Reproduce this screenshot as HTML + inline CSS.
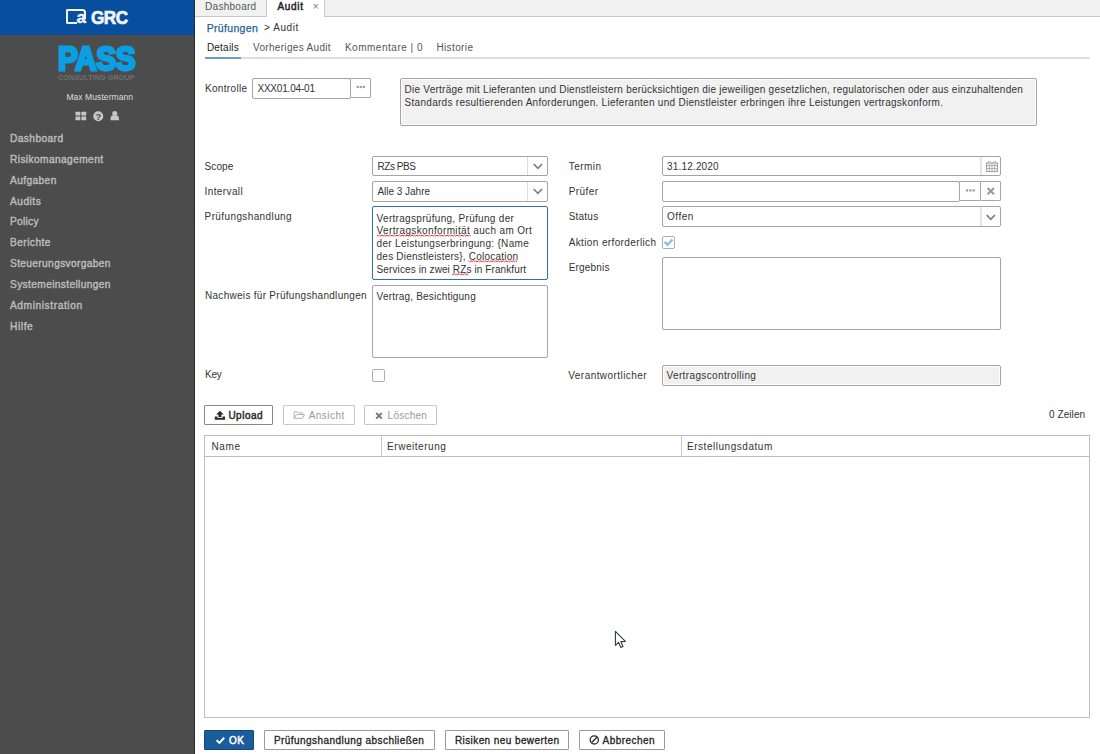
<!DOCTYPE html>
<html lang="de"><head><meta charset="utf-8"><title>CaGRC – Audit</title>
<style>
html,body{margin:0;padding:0;}
body{width:1100px;height:754px;position:relative;overflow:hidden;background:#fff;font-family:"Liberation Sans",sans-serif;font-size:10px;color:#333;}
.a{position:absolute;box-sizing:border-box;}
.t{position:absolute;white-space:nowrap;line-height:14px;height:14px;}
.t u{text-decoration:none;}
#side{left:0;top:0;width:194px;height:754px;background:#4c4c4c;}
#hdr{left:0;top:0;width:194px;height:35px;background:#084e9e;}
#edge{left:194px;top:0;width:1px;height:754px;background:#2a2a2a;}
#edge2{left:195px;top:0;width:1px;height:754px;background:#f4f4f4;}
#tabbar{left:195px;top:0;width:905px;height:17px;background:#f1f1f1;border-bottom:1px solid #c9c9c9;}
#tabD{left:196px;top:0;width:71px;height:17px;border-right:1px solid #c9c9c9;}
#tabA{left:267px;top:0;width:58px;height:17px;background:#fff;border-right:1px solid #c9c9c9;}
.box{border:1px solid #a4a4a4;background:#fff;border-radius:2px;}
.ro{background:#f1f1f1;box-shadow:inset 0 0 0 1px #fdfdfd;}
.btn{border:1px solid #c8c8c8;background:#fff;border-radius:1px;}
svg{position:absolute;overflow:visible;}
a.t{text-decoration:none;cursor:pointer;}
label.t{display:block;}
aside,main,nav,form,header,footer{display:block;margin:0;padding:0;}
</style></head>
<body>
<aside id="sidebar">
 <div class="a" id="side"></div>
 <header id="brand" aria-label="CaGRC">
  <div class="a" id="hdr"></div>
  <div class="a" style="left:66px;top:9px;width:11px;height:15px;border:2px solid #f2f4f8;border-right:none;border-radius:2px 0 0 2px;"></div>
  <div class="a" style="left:76px;top:9px;width:10px;height:10px;border-top:2px solid #f2f4f8;border-right:2.4px solid #f2f4f8;border-radius:0 3.5px 0 0;"></div>
  <span class="a" id="lg_a" style="left:76.6px;top:6.55px;font-size:17px;line-height:22px;font-weight:700;color:#f2f4f8;-webkit-text-stroke:0.4px #f2f4f8;">a</span>
  <span class="a" id="lg_grc" style="left:91.4px;top:7px;font-size:18.6px;line-height:22px;font-weight:700;color:#f2f4f8;-webkit-text-stroke:0.7px #f2f4f8;letter-spacing:-0.5px;transform-origin:0 0;transform:scaleX(0.92);">GRC</span>
 </header>
 <div id="company">
  <span class="a" id="lg_pass" style="left:57.9px;top:37.8px;font-size:33.5px;line-height:42px;font-weight:700;color:#0a9fe5;-webkit-text-stroke:2.8px #0a9fe5;letter-spacing:-0.5px;transform-origin:0 0;transform:scaleX(0.89);">PASS</span>
  <span class="a" id="lg_cg" style="left:58px;top:73.2px;font-size:7.2px;line-height:10px;font-weight:700;color:#6f6f6f;letter-spacing:0.08px;white-space:nowrap;">CONSULTING GROUP</span>
 </div>
 <div id="userbox">
  <span class="t" id="user" style="left:66.39px;top:89.92px;font-size:8.5px;color:#dcdcdc;letter-spacing:0.077px;">Max Mustermann</span>
  <svg style="left:0;top:0;" width="194" height="130" viewBox="0 0 194 130">
   <g fill="#c6c6c6">
    <rect x="75.5" y="111.8" width="4.8" height="3.7" rx="0.5"/><rect x="81.4" y="111.8" width="4.8" height="3.7" rx="0.5"/>
    <rect x="75.5" y="116.5" width="4.8" height="3.7" rx="0.5"/><rect x="81.4" y="116.5" width="4.8" height="3.7" rx="0.5"/>
    <circle cx="98.25" cy="116.3" r="5"/>
    <circle cx="114.75" cy="113.4" r="2.5"/>
    <path d="M110.5,120.3 L110.5,118.2 Q110.6,115.6 112.8,115.3 Q114.75,116.6 116.7,115.3 Q118.9,115.6 119,118.2 L119,120.3 Z"/>
   </g>
   <text x="98.3" y="119.7" text-anchor="middle" font-family="Liberation Sans, sans-serif" font-weight="700" font-size="9.5" fill="#4d4d4d">?</text>
  </svg>
 </div>
 <nav id="menu">
  <a class="t" id="m0" style="left:9.99px;top:131.84px;font-size:10.2px;color:#bcbcbc;letter-spacing:0.408px;-webkit-text-stroke:0.4px #bcbcbc;">Dashboard</a>
  <a class="t" id="m1" style="left:9.99px;top:152.73px;font-size:10.2px;color:#bcbcbc;letter-spacing:0.389px;-webkit-text-stroke:0.4px #bcbcbc;">Risikomanagement</a>
  <a class="t" id="m2" style="left:9.99px;top:173.62px;font-size:10.2px;color:#bcbcbc;letter-spacing:0.387px;-webkit-text-stroke:0.4px #bcbcbc;">Aufgaben</a>
  <a class="t" id="m3" style="left:9.99px;top:194.51px;font-size:10.2px;color:#bcbcbc;letter-spacing:0.499px;-webkit-text-stroke:0.4px #bcbcbc;">Audits</a>
  <a class="t" id="m4" style="left:9.99px;top:215.40px;font-size:10.2px;color:#bcbcbc;letter-spacing:0.272px;-webkit-text-stroke:0.4px #bcbcbc;">Policy</a>
  <a class="t" id="m5" style="left:9.99px;top:236.29px;font-size:10.2px;color:#bcbcbc;letter-spacing:0.443px;-webkit-text-stroke:0.4px #bcbcbc;">Berichte</a>
  <a class="t" id="m6" style="left:9.99px;top:257.18px;font-size:10.2px;color:#bcbcbc;letter-spacing:0.351px;-webkit-text-stroke:0.4px #bcbcbc;">Steuerungsvorgaben</a>
  <a class="t" id="m7" style="left:9.99px;top:278.07px;font-size:10.2px;color:#bcbcbc;letter-spacing:0.363px;-webkit-text-stroke:0.4px #bcbcbc;">Systemeinstellungen</a>
  <a class="t" id="m8" style="left:9.99px;top:298.96px;font-size:10.2px;color:#bcbcbc;letter-spacing:0.583px;-webkit-text-stroke:0.4px #bcbcbc;">Administration</a>
  <a class="t" id="m9" style="left:9.99px;top:319.85px;font-size:10.2px;color:#bcbcbc;letter-spacing:0.586px;-webkit-text-stroke:0.4px #bcbcbc;">Hilfe</a>
 </nav>
 <div class="a" id="edge"></div>
</aside>
<main id="content">
 <div class="a" id="tabbar" role="tablist"></div>
 <div class="a" id="tabD" role="tab"></div>
 <span class="t" id="tab1" style="left:205.10px;top:0.15px;color:#555;letter-spacing:0.264px;">Dashboard</span>
 <div class="a" id="tabA" role="tab"></div>
 <span class="t" id="tab2" style="left:277.40px;top:0.15px;color:#222;letter-spacing:0.681px;-webkit-text-stroke:0.45px #222;">Audit</span>
 <span class="t" id="tabx" style="left:312.70px;top:0.15px;color:#777;letter-spacing:0.556px;">×</span>
 <nav id="breadcrumb"><a class="t" id="bc1" style="left:206.67px;top:20.83px;font-size:10.5px;color:#2a5c9a;letter-spacing:0.331px;-webkit-text-stroke:0.25px #2a5c9a;">Prüfungen</a><span class="t" id="bc2" style="left:263.90px;top:21.15px;letter-spacing:0.606px;">> Audit</span></nav>
 <div id="subtabs">
  <div class="a" style="left:205px;top:57px;width:885px;height:2px;background:#dddddd;"></div>
  <div class="a" style="left:205px;top:57px;width:36px;height:2px;background:#6f9cc6;"></div>
  <a class="t" id="st1" style="left:206.90px;top:40.65px;color:#222;letter-spacing:0.217px;">Details</a>
  <a class="t" id="st2" style="left:253.00px;top:40.65px;color:#555;letter-spacing:0.317px;">Vorheriges Audit</a>
  <a class="t" id="st3" style="left:344.90px;top:40.65px;color:#555;letter-spacing:0.517px;">Kommentare | 0</a>
  <a class="t" id="st4" style="left:436.40px;top:40.65px;color:#555;letter-spacing:0.387px;">Historie</a>
 </div>
 <form id="audit">
  <div class="row"><label class="t" id="lk" style="left:204.90px;top:82.15px;letter-spacing:0.337px;">Kontrolle</label>
   <div class="a box" style="left:252px;top:78px;width:99px;height:21px;"><span class="t" id="ik" style="left:4.40px;top:3.15px;letter-spacing:-0.182px;">XXX01.04-01</span></div>
   <div class="a btn" role="button" style="left:350px;top:78px;width:21px;height:20px;border-color:#a6a6a6;"></div>
   <div class="a box ro" style="left:400px;top:78px;width:637px;height:48px;"><span class="t" id="d1" style="left:3.60px;top:3.55px;letter-spacing:0.238px;">Die Verträge mit Lieferanten und Dienstleistern berücksichtigen die jeweiligen gesetzlichen, regulatorischen oder aus einzuhaltenden</span><span class="t" id="d2" style="left:3.60px;top:16.75px;letter-spacing:0.283px;">Standards resultierenden Anforderungen. Lieferanten und Dienstleister erbringen ihre Leistungen vertragskonform.</span></div>
  </div>
  <div class="col" id="colL">
   <label class="t" id="l1" style="left:204.60px;top:159.85px;letter-spacing:0.088px;">Scope</label>
   <div class="a box select" role="combobox" style="left:372px;top:156px;width:176px;height:20px;"><span class="t" id="i1" style="left:4.40px;top:2.85px;letter-spacing:-0.418px;">RZs PBS</span></div>
   <div class="a" style="left:527px;top:157px;width:1px;height:18px;background:#ddd;"></div>
   <label class="t" id="l2" style="left:204.60px;top:184.75px;letter-spacing:0.387px;">Intervall</label>
   <div class="a box select" role="combobox" style="left:372px;top:181px;width:176px;height:21px;"><span class="t" id="i2" style="left:4.40px;top:2.75px;letter-spacing:-0.018px;">Alle 3 Jahre</span></div>
   <div class="a" style="left:527px;top:182px;width:1px;height:19px;background:#ddd;"></div>
   <label class="t" id="l3" style="left:204.60px;top:209.85px;letter-spacing:0.388px;">Prüfungshandlung</label>
   <div class="a box textarea focus" style="left:372px;top:206px;width:176px;height:74px;border-color:#2f6db3;"><span class="t" id="ta0" style="left:3.60px;top:4.55px;letter-spacing:0.308px;">Vertragsprüfung, Prüfung der</span><span class="t" id="ta1" style="left:3.60px;top:17.30px;letter-spacing:0.357px;"><u>Vertragskonformität</u> auch am Ort</span><span class="t" id="ta2" style="left:3.60px;top:30.05px;letter-spacing:0.299px;">der Leistungserbringung: {Name</span><span class="t" id="ta3" style="left:3.60px;top:42.80px;letter-spacing:0.210px;">des Dienstleisters}, <u>Colocation</u></span><span class="t" id="ta4" style="left:3.60px;top:55.55px;letter-spacing:0.104px;">Services in zwei <u>RZs</u> in Frankfurt</span></div>
   <label class="t" id="l4" style="left:205.00px;top:289.15px;letter-spacing:0.291px;">Nachweis für Prüfungshandlungen</label>
   <div class="a box textarea" style="left:372px;top:285px;width:176px;height:73px;"><span class="t" id="i4" style="left:3.60px;top:3.85px;letter-spacing:0.202px;">Vertrag, Besichtigung</span></div>
   <label class="t" id="l5" style="left:205.00px;top:368.25px;letter-spacing:-0.211px;">Key</label>
   <div class="a box check" role="checkbox" style="left:372px;top:369px;width:13px;height:13px;border-color:#adadad;"></div>
  </div>
  <div class="col" id="colR">
   <label class="t" id="r1" style="left:568.70px;top:159.85px;letter-spacing:0.481px;">Termin</label>
   <div class="a box" style="left:662px;top:156px;width:339px;height:20px;"><span class="t" id="j1" style="left:4.10px;top:2.85px;letter-spacing:0.164px;">31.12.2020</span></div>
   <div class="a" style="left:980px;top:157px;width:2px;height:18px;background:#e6e6e6;"></div>
   <label class="t" id="r2" style="left:568.70px;top:184.75px;letter-spacing:0.411px;">Prüfer</label>
   <div class="a box" style="left:662px;top:181px;width:298px;height:21px;"></div>
   <div class="a btn" role="button" style="left:959px;top:181px;width:22px;height:20px;border-color:#a6a6a6;"></div>
   <div class="a btn" role="button" style="left:980px;top:181px;width:21px;height:20px;border-color:#a6a6a6;"></div>
   <label class="t" id="r3" style="left:568.70px;top:209.85px;letter-spacing:0.223px;">Status</label>
   <div class="a box select" role="combobox" style="left:662px;top:206px;width:339px;height:21px;"><span class="t" id="j3" style="left:4.10px;top:3.15px;letter-spacing:0.464px;">Offen</span></div>
   <div class="a" style="left:980px;top:207px;width:2px;height:19px;background:#e6e6e6;"></div>
   <label class="t" id="r4" style="left:568.70px;top:235.55px;letter-spacing:0.374px;">Aktion erforderlich</label>
   <div class="a box check" role="checkbox" style="left:662px;top:236px;width:13px;height:13px;border-color:#adadad;"></div>
   <label class="t" id="r5" style="left:568.70px;top:260.55px;letter-spacing:0.179px;">Ergebnis</label>
   <div class="a box textarea" style="left:662px;top:257px;width:339px;height:73px;"></div>
   <label class="t" id="r6" style="left:568.30px;top:368.95px;letter-spacing:0.444px;">Verantwortlicher</label>
   <div class="a box ro" style="left:662px;top:365px;width:339px;height:21px;"><span class="t" id="j6" style="left:3.50px;top:3.35px;letter-spacing:0.367px;">Vertragscontrolling</span></div>
  </div>
 </form>
 <div id="toolbar">
  <div class="a btn" role="button" style="left:204px;top:405px;width:69px;height:20px;border-color:#8a8a8a;"><span class="t" id="b1" style="left:23.40px;top:2.85px;color:#2a2a2a;letter-spacing:0.499px;-webkit-text-stroke:0.45px #2a2a2a;">Upload</span></div>
  <div class="a btn disabled" role="button" style="left:283px;top:405px;width:72px;height:20px;"><span class="t" id="b2" style="left:24.70px;top:2.85px;color:#999;letter-spacing:0.458px;">Ansicht</span></div>
  <div class="a btn disabled" role="button" style="left:364px;top:405px;width:73px;height:20px;"><span class="t" id="b3" style="left:22.60px;top:2.85px;color:#999;letter-spacing:0.255px;">Löschen</span></div>
  <span class="t" id="rows" style="left:1049.00px;top:408.45px;letter-spacing:0.078px;">0 Zeilen</span>
 </div>
 <div id="grid" role="table">
  <div class="a" style="left:204px;top:435px;width:886px;height:283px;border:1px solid #bdbdbd;"></div>
  <div class="a" style="left:204px;top:456px;width:886px;height:1px;background:#bdbdbd;"></div>
  <div class="a" style="left:381px;top:436px;width:1px;height:20px;background:#c8c8c8;"></div>
  <div class="a" style="left:681px;top:436px;width:1px;height:20px;background:#c8c8c8;"></div>
  <span class="t" id="h1" role="columnheader" style="left:211.40px;top:439.95px;letter-spacing:0.703px;">Name</span>
  <span class="t" id="h2" role="columnheader" style="left:387.10px;top:439.95px;letter-spacing:0.540px;">Erweiterung</span>
  <span class="t" id="h3" role="columnheader" style="left:687.00px;top:439.95px;letter-spacing:0.533px;">Erstellungsdatum</span>
 </div>
 <footer id="actions">
  <div class="a btn primary" role="button" style="left:204px;top:730px;width:50px;height:20px;background:#1b5d9b;border-color:#14457a;"><span class="t" id="ok" style="left:23.90px;top:2.75px;color:#fff;letter-spacing:0.473px;-webkit-text-stroke:0.5px #fff;">OK</span></div>
  <div class="a btn" role="button" style="left:264px;top:730px;width:171px;height:20px;border-color:#9a9a9a;"><span class="t" id="bb1" style="left:8.90px;top:2.75px;color:#222;letter-spacing:0.450px;-webkit-text-stroke:0.3px #222;">Prüfungshandlung abschließen</span></div>
  <div class="a btn" role="button" style="left:445px;top:730px;width:124px;height:20px;border-color:#9a9a9a;"><span class="t" id="bb2" style="left:8.90px;top:2.75px;color:#222;letter-spacing:0.416px;-webkit-text-stroke:0.3px #222;">Risiken neu bewerten</span></div>
  <div class="a btn" role="button" style="left:579px;top:730px;width:86px;height:20px;border-color:#9a9a9a;"><span class="t" id="bb3" style="left:22.60px;top:2.75px;color:#222;letter-spacing:0.436px;-webkit-text-stroke:0.3px #222;">Abbrechen</span></div>
 </footer>
 <svg style="left:0;top:0;" width="1100" height="754" viewBox="0 0 1100 754">
  <!-- dots Kontrolle -->
  <g fill="#9a9a9a">
   <rect x="356.6" y="85.9" width="2.1" height="2.2"/><rect x="359.7" y="85.9" width="2.1" height="2.2"/><rect x="362.8" y="85.9" width="2.1" height="2.2"/>
   <rect x="966" y="189.3" width="2.2" height="2.2"/><rect x="969.3" y="189.3" width="2.2" height="2.2"/><rect x="972.6" y="189.3" width="2.2" height="2.2"/>
  </g>
  <!-- chevrons -->
  <g fill="none" stroke="#7e7e7e" stroke-width="1.7" stroke-linecap="butt" stroke-linejoin="miter">
   <path d="M533.7,164 L537.9,168.3 L542.1,164"/>
   <path d="M533.7,189 L537.9,193.3 L542.1,189"/>
   <path d="M986.7,215 L990.8,219.3 L994.9,215"/>
  </g>
  <!-- x in Pruefer -->
  <g stroke="#999" stroke-width="2" stroke-linecap="butt">
   <path d="M987.6,188 L994,194.2 M994,188 L987.6,194.2"/>
  </g>
  <!-- calendar -->
  <g>
   <rect x="986.6" y="163" width="10.8" height="8.6" fill="#fff" stroke="#999" stroke-width="1"/>
   <path d="M986.6,165.6 H997.4 M986.6,168.6 H997.4 M989.3,163 V171.6 M992,163 V171.6 M994.7,163 V171.6" stroke="#a6a6a6" stroke-width="0.9"/>
   <path d="M987.9,163.3 Q989.3,159.4 990.8,163.3 M993.2,163.3 Q994.7,159.4 996.1,163.3" fill="#fff" stroke="#999" stroke-width="1"/>
  </g>
  <!-- checkbox tick -->
  <path d="M664.6,241.9 L667.5,244.8 L672.5,239.4" fill="none" stroke="#86bce8" stroke-width="2.2" stroke-linecap="butt" stroke-linejoin="miter"/>
  <!-- upload icon -->
  <g fill="#2a2a2a">
   <path d="M219.9,410.7 L223.7,414.6 L221.4,414.6 L221.4,417.2 L218.4,417.2 L218.4,414.6 L216.1,414.6 Z"/>
   <path d="M214.8,416.6 H217.4 V418 H222.4 V416.6 H225 V419.8 H214.8 Z"/>
  </g>
  <!-- folder open outline -->
  <g fill="none" stroke="#b2b2b2" stroke-width="1" stroke-linejoin="round">
   <path d="M294.2,418.3 V411.9 H297.6 L298.5,413 H302.6 V414.6"/>
   <path d="M294.2,418.3 L296.4,414.6 H304.6 L302.4,418.3 Z"/>
  </g>
  <!-- x Loeschen -->
  <path d="M376.2,413 L381.8,418.6 M381.8,413 L376.2,418.6" stroke="#7a7a7a" stroke-width="2" />
  <!-- ok check -->
  <path d="M216.6,740.2 L219.4,742.9 L224.2,737.7" fill="none" stroke="#fff" stroke-width="2" stroke-linecap="butt" stroke-linejoin="miter"/>
  <!-- ban -->
  <g fill="none" stroke="#2a2a2a" stroke-width="1.3">
   <circle cx="594.3" cy="739.9" r="4.1"/>
   <path d="M597.2,737 L591.4,742.8"/>
  </g>
  <!-- spellcheck wavy underlines -->
  <polyline points="377.0,235.05 378.2,236.15 379.5,235.05 380.8,236.15 382.0,235.05 383.2,236.15 384.5,235.05 385.8,236.15 387.0,235.05 388.2,236.15 389.5,235.05 390.8,236.15 392.0,235.05 393.2,236.15 394.5,235.05 395.8,236.15 397.0,235.05 398.2,236.15 399.5,235.05 400.8,236.15 402.0,235.05 403.2,236.15 404.5,235.05 405.8,236.15 407.0,235.05 408.2,236.15 409.5,235.05 410.8,236.15 412.0,235.05 413.2,236.15 414.5,235.05 415.8,236.15 417.0,235.05 418.2,236.15 419.5,235.05 420.8,236.15 422.0,235.05 423.2,236.15 424.5,235.05 425.8,236.15 427.0,235.05 428.2,236.15 429.5,235.05 430.8,236.15 432.0,235.05 433.2,236.15 434.5,235.05 435.8,236.15 437.0,235.05 438.2,236.15 439.5,235.05 440.8,236.15 442.0,235.05 443.2,236.15 444.5,235.05 445.8,236.15 447.0,235.05 448.2,236.15 449.5,235.05 450.8,236.15 452.0,235.05 453.2,236.15 454.5,235.05 455.8,236.15 457.0,235.05 458.2,236.15 459.5,235.05 460.8,236.15 462.0,235.05 463.2,236.15 464.5,235.05 465.8,236.15 467.0,235.05 468.2,236.15 469.5,235.05 470.8,236.15" fill="none" stroke="#e2201c" stroke-width="0.9"/>
  <polyline points="468.4,260.75 469.6,261.85 470.9,260.75 472.1,261.85 473.4,260.75 474.6,261.85 475.9,260.75 477.1,261.85 478.4,260.75 479.6,261.85 480.9,260.75 482.1,261.85 483.4,260.75 484.6,261.85 485.9,260.75 487.1,261.85 488.4,260.75 489.6,261.85 490.9,260.75 492.1,261.85 493.4,260.75 494.6,261.85 495.9,260.75 497.1,261.85 498.4,260.75 499.6,261.85 500.9,260.75 502.1,261.85 503.4,260.75 504.6,261.85 505.9,260.75 507.1,261.85 508.4,260.75 509.6,261.85 510.9,260.75 512.1,261.85 513.4,260.75 514.6,261.85 515.9,260.75 517.1,261.85" fill="none" stroke="#e2201c" stroke-width="0.9"/>
  <polyline points="452.0,273.75 453.2,274.85 454.5,273.75 455.8,274.85 457.0,273.75 458.2,274.85 459.5,273.75 460.8,274.85 462.0,273.75 463.2,274.85 464.5,273.75 465.8,274.85 467.0,273.75 468.2,274.85" fill="none" stroke="#e2201c" stroke-width="0.9"/>
  <!-- mouse cursor -->
  <path d="M615.4,631.4 L615.4,645.4 L618.6,642.4 L620.9,647.4 L623,646.4 L620.8,641.6 L625.4,641.4 Z" fill="#fff" stroke="#333a4a" stroke-width="1.1" stroke-linejoin="round"/>
 </svg>
</main>
</body></html>
